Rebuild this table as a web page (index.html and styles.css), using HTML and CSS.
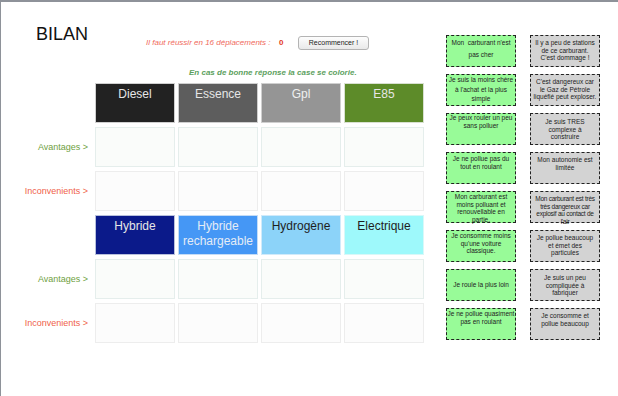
FILE: index.html
```html
<!DOCTYPE html>
<html lang="fr">
<head>
<meta charset="utf-8">
<title>Bilan</title>
<link rel="stylesheet" href="styles.css">
</head>
<body>
<div class="page">
  <div class="main">
    <div class="top">
      <h1 class="title">BILAN</h1>
      <p class="msg">Il faut réussir en 16 déplacements :</p>
      <span class="count">0</span>
      <button class="restart" type="button">Recommencer !</button>
    </div>
    <p class="hint">En cas de bonne réponse la case se colorie.</p>
    <div class="board">
      <div class="label"></div>
      <div class="head diesel">Diesel</div>
      <div class="head essence">Essence</div>
      <div class="head gpl">Gpl</div>
      <div class="head e85">E85</div>

      <div class="label pro">Avantages &gt;</div>
      <div class="cell pro-cell"></div>
      <div class="cell pro-cell"></div>
      <div class="cell pro-cell"></div>
      <div class="cell pro-cell"></div>

      <div class="label con">Inconvenients &gt;</div>
      <div class="cell con-cell"></div>
      <div class="cell con-cell"></div>
      <div class="cell con-cell"></div>
      <div class="cell con-cell"></div>

      <div class="label"></div>
      <div class="head hybride">Hybride</div>
      <div class="head rechargeable">Hybride rechargeable</div>
      <div class="head hydrogene">Hydrogène</div>
      <div class="head electrique">Electrique</div>

      <div class="label pro">Avantages &gt;</div>
      <div class="cell pro-cell"></div>
      <div class="cell pro-cell"></div>
      <div class="cell pro-cell"></div>
      <div class="cell pro-cell"></div>

      <div class="label con">Inconvenients &gt;</div>
      <div class="cell con-cell"></div>
      <div class="cell con-cell"></div>
      <div class="cell con-cell"></div>
      <div class="cell con-cell"></div>
    </div>
  </div>

  <div class="cards">
    <div class="card good g1">Mon&nbsp; carburant n'est<br>pas cher</div>
    <div class="card bad">Il y a peu de stations<br>de ce carburant.<br>C'est dommage !</div>

    <div class="card good g2">Je suis la moins chère<br>à l'achat et la plus<br>simple</div>
    <div class="card bad">C'est dangereux car<br>le Gaz de Pétrole<br>liquéfié peut exploser.</div>

    <div class="card good g3">Je peux rouler un peu<br>sans polluer</div>
    <div class="card bad b-low">Je suis TRES<br>complexe à<br>construire</div>

    <div class="card good g4">Je ne pollue pas du<br>tout en roulant</div>
    <div class="card bad">Mon autonomie est<br>limitée</div>

    <div class="card good">Mon carburant est<br>moins polluant et<br>renouvellable en<br>partie.</div>
    <div class="card bad b-tight">Mon carburant est très<br>très dangereux car<br>explosif au contact de<br>l'air</div>

    <div class="card good">Je consomme moins<br>qu'une voiture<br>classique.</div>
    <div class="card bad">Je pollue beaucoup<br>et émet des<br>particules</div>

    <div class="card good g7">Je roule la plus loin</div>
    <div class="card bad b-low">Je suis un peu<br>compliquée à<br>fabriquer</div>

    <div class="card good">Je ne pollue quasiment<br>pas en roulant</div>
    <div class="card bad">Je consomme et<br>pollue beaucoup</div>
  </div>
</div>
</body>
</html>
```

FILE: styles.css
```css
* { box-sizing: border-box; }

html, body {
  margin: 0;
  padding: 0;
  background: #ffffff;
}

body {
  font-family: "Liberation Sans", Arial, Helvetica, sans-serif;
  color: #222;
}

.page {
  display: flex;
  width: 618px;
  height: 396px;
  border-top: 2px solid #8e9299;
  border-left: 1px solid #8e9299;
}

.main {
  width: 420px;
  flex: none;
}

.top {
  display: flex;
  align-items: flex-start;
  padding-top: 21px;
}

.title {
  margin: 0 0 0 35px;
  width: 110px;
  font-size: 18px;
  line-height: 22px;
  font-weight: normal;
  color: #111;
}

.msg {
  margin: 15px 0 0 0;
  width: 133px;
  font-size: 8px;
  line-height: 10px;
  font-style: italic;
  color: #f06a5c;
}

.count {
  margin-top: 15px;
  width: 19px;
  font-size: 8px;
  line-height: 10px;
  font-weight: bold;
  color: #e23a22;
}

.restart {
  margin: 13px 0 0 0;
  width: 71px;
  height: 14px;
  padding: 0;
  font-family: "Liberation Sans", Arial, sans-serif;
  font-size: 7px;
  line-height: 12px;
  color: #222;
  background: linear-gradient(#fdfdfd, #e9e9e9);
  border: 1px solid #b4b4b4;
  border-radius: 3px;
}

.hint {
  margin: 18px 0 0 188px;
  font-size: 8px;
  line-height: 10px;
  font-weight: bold;
  font-style: italic;
  color: #5c9f5e;
}

.board {
  margin-top: 5px;
  display: grid;
  grid-template-columns: 91px repeat(4, 80px);
  grid-auto-rows: 40px;
  column-gap: 3px;
  row-gap: 4px;
}

.label {
  display: flex;
  align-items: center;
  justify-content: flex-end;
  padding-right: 4px;
  font-size: 9px;
}

.label.pro { color: #6f9f3e; }
.label.con { color: #ef5f4a; }

.head {
  border: 1px solid #cfcfcf;
  padding-top: 3px;
  text-align: center;
  font-size: 12px;
  line-height: 15px;
  color: #e6e6e6;
}

.diesel { background: #222222; }
.essence { background: #5d5d5d; }
.gpl { background: #959595; color: #f0f0f0; }
.e85 { background: #5d8b29; border-color: #d8e0d0; }
.hybride { background: #0b1a8a; border-color: #b8c0dc; }
.rechargeable { background: #4597f5; border-color: #c4dcf6; color: #e4ecf6; }
.hydrogene { background: #8cd3f9; border-color: #d0eafa; color: #1e1e1e; }
.electrique { background: #9ef9fb; border-color: #d8f8f8; color: #1e1e1e; }

.cell {
  border: 1px solid #eceff0;
}

.pro-cell {
  background: #fafcfa;
  border-color: #e5eeec;
}

.con-cell {
  background: #fcfcfc;
  border-color: #ededed;
}

.cards {
  display: grid;
  grid-template-columns: 70px 70px;
  grid-auto-rows: 32px;
  column-gap: 14px;
  row-gap: 7px;
  margin-left: 25px;
  padding-top: 33px;
  align-content: start;
}

.card {
  border: 1px dashed #222;
  text-align: center;
  white-space: nowrap;
  font-size: 6.5px;
  line-height: 7.5px;
  color: #222;
  padding: 1px 0 0 0;
}

.good { background: #98fb98; }
.bad { background: #d3d3d3; padding-top: 3px; }

.g1 { line-height: 12px; padding-top: 1px; }
.g2 { line-height: 9.5px; padding-top: 0; }
.g3 { padding-top: 0; }
.g4 { padding-top: 2px; }
.g7 {
  display: flex;
  align-items: center;
  justify-content: center;
  padding: 0;
}

.b-low { padding-top: 4px; }
.b-tight { letter-spacing: -0.25px; }
```
